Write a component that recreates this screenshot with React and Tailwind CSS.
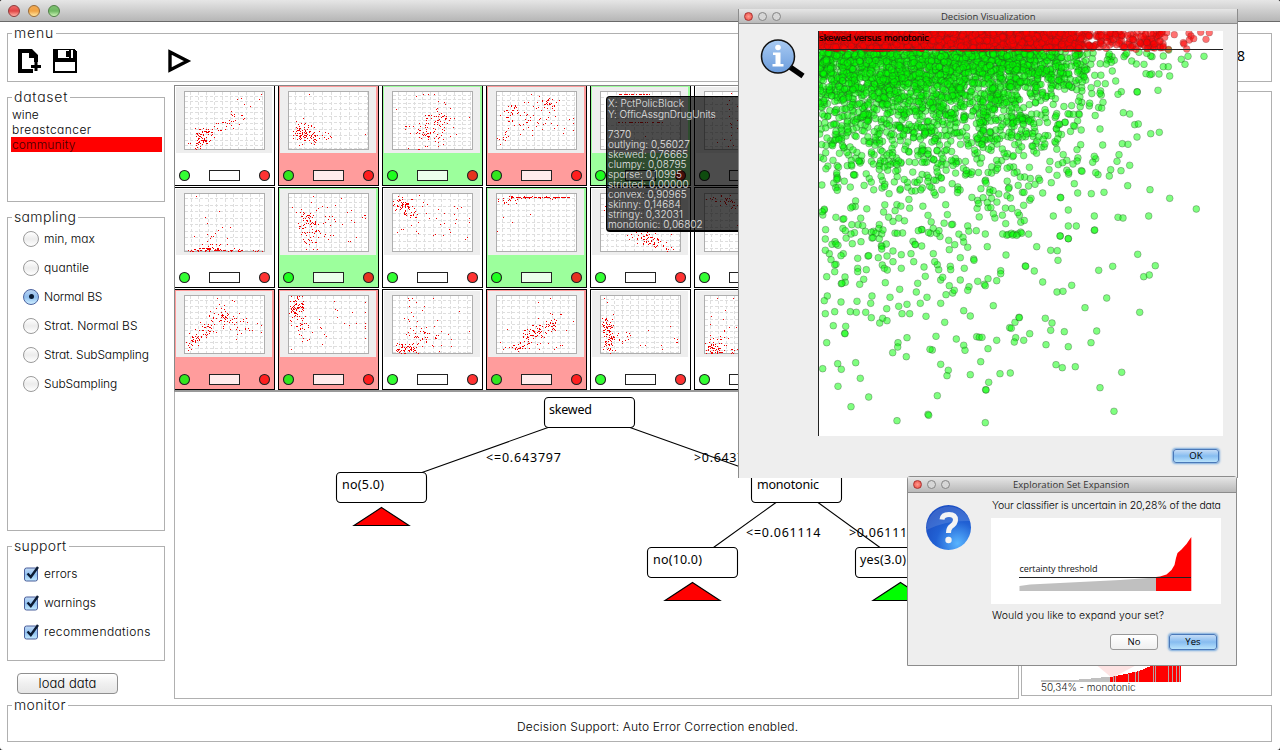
import React from 'react';

/* ---------- deterministic sample data ---------- */

function makeRandom(seed) {
  let s = seed >>> 0;
  return () => {
    s = (s + 0x6d2b79f5) >>> 0;
    let t = s;
    t = Math.imul(t ^ (t >>> 15), t | 1);
    t ^= t + Math.imul(t ^ (t >>> 7), t | 61);
    return ((t ^ (t >>> 14)) >>> 0) / 4294967296;
  };
}

function gauss(rnd) {
  const u = Math.max(rnd(), 1e-6);
  return Math.sqrt(-2 * Math.log(u)) * Math.cos(2 * Math.PI * rnd());
}

// cluster: [cx, cy, sx, sy, correlation, count]; band: [x0, x1, y0, y1, count]
const PLOTS = [
  { tone: 'white', gx: 8, gy: 5.5, clusters: [[17, 46, 5, 5, -0.4, 70], [35, 33, 11, 7, -0.8, 45]], dots: [[76, 2], [74, 7], [52, 7], [56, 6], [46, 19], [57, 23], [3, 51]] },
  { tone: 'red', gx: 9, gy: 6.5, clusters: [[14, 43, 5, 4, 0, 75], [24, 44, 7, 4, 0, 28], [13, 34, 4, 3, 0, 12]], dots: [[20, 2], [76, 42], [39, 41], [42, 45], [14, 26]] },
  { tone: 'green', gx: 8, gy: 4.2, clusters: [[40, 36, 12, 9, 0, 65], [46, 24, 5, 4, 0, 25], [34, 40, 5, 4, 0, 15]], dots: [[23, 4], [30, 2], [35, 2], [41, 2], [3, 17], [76, 25], [13, 34], [12, 34], [15, 56], [25, 57], [26, 57], [45, 9], [51, 10], [52, 12], [57, 16]] },
  { tone: 'red', gx: 8, gy: 5, clusters: [[50, 12, 9, 4, 0, 35], [14, 19, 5, 5, 0, 28], [34, 32, 15, 6, 0, 40], [8, 42, 3, 7, 0, 10]], dots: [[34, 2], [76, 26], [76, 38], [76, 31], [3, 52]] },
  { tone: 'green', gx: 9, gy: 7, clusters: [], bands: [[17, 52, 2, 2, 26], [14, 62, 30, 30, 25]], dots: [[30, 8], [20, 40], [44, 44]] },
  { tone: 'white', gx: 10, gy: 7, clusters: [[25, 36, 10, 14, 0, 22]], dots: [[24, 17], [60, 30]] },
  { tone: 'white', gx: 8.5, gy: 6.5, clusters: [[25, 48, 8, 6, 0, 18]], bands: [[3, 56, 55, 57, 46], [12, 40, 53, 55, 20], [50, 78, 56, 57, 8]], dots: [[11, 2], [34, 17], [20, 23], [22, 29], [37, 33], [45, 33], [9, 42], [26, 42], [42, 44], [42, 50]] },
  { tone: 'green', gx: 7.5, gy: 5, clusters: [[17, 26, 5, 8, 0, 55], [30, 36, 8, 13, 0, 35], [18, 46, 6, 5, 0, 15]], bands: [[34, 76, 10, 48, 14]], dots: [[24, 2], [52, 4], [76, 21], [76, 24], [62, 16], [3, 13]] },
  { tone: 'white', gx: 8.5, gy: 7, clusters: [[10, 11, 5, 5, 0, 55], [20, 14, 8, 7, 0, 25]], bands: [[4, 76, 18, 50, 22]], dots: [[61, 12], [64, 14], [68, 13], [76, 24], [76, 28], [5, 2], [30, 8]] },
  { tone: 'green', gx: 8, gy: 6, clusters: [[10, 7, 6, 4, 0, 16]], bands: [[14, 77, 3, 3.4, 70], [10, 60, 2, 5, 24]], dots: [[33, 20], [15, 28], [6, 23], [0, 37]] },
  { tone: 'white', gx: 9, gy: 6, clusters: [[40, 43, 9, 4, 0.5, 40], [58, 51, 9, 4, 0.6, 34]], dots: [[4, 12], [3, 16], [70, 40]] },
  { tone: 'white', gx: 9, gy: 7, clusters: [[26, 9, 12, 5, 0.6, 45]], dots: [[8, 3], [32, 31]] },
  { tone: 'red', gx: 7.8, gy: 6, clusters: [[9, 45, 5, 5, -0.7, 30], [21, 33, 6, 6, -0.5, 38], [36, 20, 7, 5, 0.1, 42], [50, 29, 9, 5, 0.3, 25]], dots: [[32, 2], [47, 4], [34, 8], [54, 17], [61, 22], [76, 29], [76, 36], [72, 27], [3, 54]] },
  { tone: 'red', gx: 7.8, gy: 7.5, clusters: [[7, 8, 4, 5, 0, 42], [6, 14, 3, 3, 0, 24], [9, 27, 6, 7, 0, 32], [14, 38, 6, 4, 0, 9]], dots: [[45, 5], [76, 6], [46, 13], [48, 14], [48, 21], [63, 16], [76, 16], [55, 27], [60, 29], [67, 27], [76, 27], [76, 30], [76, 32], [76, 42], [30, 23], [31, 31], [32, 32], [35, 38], [37, 40], [33, 48], [2, 53]] },
  { tone: 'white', gx: 8.5, gy: 6.5, clusters: [[11, 52, 5, 3, 0, 50], [24, 42, 8, 7, 0, 36], [18, 16, 5, 7, 0, 10], [38, 40, 10, 10, 0, 18]], dots: [[15, 2], [16, 4], [23, 6], [40, 2], [66, 15], [76, 35], [58, 43], [58, 50]] },
  { tone: 'red', gx: 8.2, gy: 6, clusters: [[34, 39, 6, 5, -0.4, 46], [48, 30, 7, 5, -0.6, 46], [21, 51, 6, 3, -0.2, 24], [50, 44, 7, 4, 0, 10]], dots: [[53, 2], [41, 6], [10, 33], [3, 46], [6, 53], [76, 25], [69, 34], [63, 49], [55, 18]] },
  { tone: 'white', gx: 8, gy: 5.3, clusters: [[8, 42, 3, 7, 0, 74], [5, 28, 3, 4, 0, 26], [22, 42, 7, 4, 0, 15]], dots: [[3, 2], [6, 6], [12, 18], [47, 34], [69, 30], [44, 49], [39, 49], [60, 49], [61, 53], [73, 42], [76, 46], [75, 46], [76, 43]] },
  { tone: 'white', gx: 8, gy: 6.2, clusters: [[9, 51, 6, 4, 0, 40]], bands: [[0, 50, 53, 57, 36], [4, 24, 30, 50, 12]], dots: [[12, 2], [28, 2], [20, 14], [18, 23], [6, 20], [5, 28], [31, 31]] },
];

const TONES = { white: '#ffffff', red: '#ff9c9c', green: '#9cff9c' };

function dotPath(plot, seed) {
  const rnd = makeRandom(seed);
  const pts = [...plot.dots];
  for (const [cx, cy, sx, sy, r, n] of plot.clusters) {
    for (let i = 0; i < n; i++) {
      const a = gauss(rnd);
      const b = gauss(rnd);
      pts.push([cx + sx * a, cy + sy * (r * a + Math.sqrt(1 - r * r) * b)]);
    }
  }
  for (const [x0, x1, y0, y1, n] of plot.bands || []) {
    for (let i = 0; i < n; i++) pts.push([x0 + (x1 - x0) * rnd(), y0 + (y1 - y0) * rnd()]);
  }
  return pts
    .map(([x, y]) => [Math.round(x), Math.round(y)])
    .filter(([x, y]) => x >= 0 && x <= 78 && y >= 0 && y <= 57)
    .map(([x, y]) => `M${x + 11} ${y + 7}h1v1h-1z`)
    .join('');
}

function gridPath(gx, gy) {
  let d = '';
  for (let x = gx * 0.65; x < 79; x += gx) d += `M${Math.round(x) + 11.5} 7v57`;
  for (let y = gy * 0.65; y < 57; y += gy) d += `M11 ${Math.round(y) + 7.5}h79`;
  return d;
}

function ScatterCell({ plot, index }) {
  return (
    <svg width="101" height="101" className="block" shapeRendering="crispEdges">
      <rect x="0.5" y="0.5" width="100" height="100" fill={TONES[plot.tone]} stroke="#000" />
      <rect x="2" y="2" width="96" height="66" fill="#eeeeee" />
      <rect x="10.5" y="6.5" width="80" height="58" fill="#fff" stroke="#aeaeae" />
      <path d={gridPath(plot.gx, plot.gy)} stroke="#dedede" strokeDasharray="3 2" fill="none" />
      <path d={dotPath(plot, index * 97 + 11)} fill="#f00000" />
      <rect x="35.5" y="85.5" width="30" height="10" fill="#fff" fillOpacity="0.8" stroke="#222" />
      <g shapeRendering="auto" stroke="#222" strokeWidth="1.1">
        <circle cx="10.5" cy="90.5" r="5" fill={plot.tone === 'white' ? '#33ff33' : plot.tone === 'red' ? '#33e61f' : '#1fff1f'} />
        <circle cx="90.5" cy="90.5" r="5" fill={plot.tone === 'white' ? '#ff3333' : plot.tone === 'red' ? '#ff1f1f' : '#e6331f'} />
      </g>
    </svg>
  );
}

/* ---------- decision scatter ---------- */

// Lower region, three units per pixel.
const SPARSE = [
  [271,27],[300,35],[291,43],[309,46],[303,42],[348,12],[352,41],[378,35],[411,24],[414,23],[433,26],[439,47],[441,49],[454,42],[440,57],[487,10],[474,63],[474,95],[534,34],[540,43],[541,44],[560,48],[528,71],[499,74],[456,78],[430,83],[399,78],[401,77],[368,85],[325,71],[318,77],[283,71],[271,61],[288,89],[303,103],[299,104],[299,125],[275,140],[330,141],[331,157],[319,161],[321,160],[368,115],[368,125],[394,119],[386,148],[374,163],[442,105],[448,115],[457,120],[499,115],[536,95],[567,111],[571,139],[548,160],[451,158],[494,178],[544,186],[465,202],[411,198],[407,220],[366,214],[318,216],[277,198],[268,212],[271,251],[299,245],[346,245],[364,247],[392,247],[409,263],[434,279],[443,265],[456,272],[455,236],[491,229],[516,223],[501,251],[524,251],[556,220],[576,202],[573,259],[295,287],[332,289],[329,310],[330,311],[275,338],[516,323],[489,338],[488,351],[473,368],[514,380],[308,401],[319,418],[362,398],[263,416],[309,469],[376,445],[401,501],[348,530],[486,572],[579,553],[581,556],[607,497],[592,360],[585,358],[603,319],[629,277],[617,220],[633,194],[653,189],[658,181],[643,167],[617,150],[623,142],[611,119],[607,104],[599,95],[595,71],[643,59],[659,44],[641,31],[684,22],[686,36],[698,52],[676,83],[716,87],[717,91],[646,109],[647,119],[688,115],[676,150],[702,170],[698,181],[728,154],[748,163],[751,167],[759,146],[785,152],[797,122],[797,131],[757,50],[751,12],[724,2],[803,12],[829,10],[833,15],[845,16],[813,75],[871,108],[872,109],[898,123],[905,50],[947,61],[967,62],[969,91],[976,18],[1000,26],[1078,1],[923,156],[966,186],[984,184],[1010,166],[1050,233],[1115,204],[1091,121],[1133,109],[1208,73],[1261,107],[1226,140],[1243,135],[1214,247],[775,227],[686,242],[706,258],[664,327],[686,346],[690,361],[725,320],[733,322],[741,322],[759,356],[785,331],[824,293],[829,295],[840,277],[852,262],[853,263],[842,323],[838,336],[866,331],[884,311],[931,265],[951,279],[947,301],[988,305],[1000,350],[933,344],[1085,303],[1068,338],[963,404],[982,413],[1021,410],[1160,427],[1095,473],[1137,544],[737,395],[706,434],[617,403],[640,421],[636,437],[795,431],[826,429],[761,457],[752,479],[753,480],[751,578],[331,2],[391,4],[444,0],[550,2],[605,10],[612,2],
];

// Right margin of the cloud, three units per pixel.
const MARGIN = [
  [416,150],[474,169],[522,169],[454,178],[465,193],[400,200],[415,200],[419,228],[387,222],[365,222],[348,221],[360,224],[342,193],[319,192],[305,183],[366,170],[362,168],[327,157],[350,160],[400,168],[286,165],[384,271],[321,275],[322,276],[274,275],[264,283],[257,243],[247,213],[253,181],[246,170],[240,178],[236,168],[232,180],[244,187],[229,192],[238,162],[282,170],[290,160],[226,251],[280,338],[299,342],[314,374],[325,372],[321,411],[362,401],[388,397],[277,431],[294,433],[267,464],[261,484],[299,496],[273,512],[242,509],[238,528],[218,435],[210,387],[219,307],[210,280],[204,524],[293,557],[360,569],[419,595],[499,627],[356,648],[264,652],[279,654],[222,577],[184,581],[143,579],[133,551],[193,648],[194,690],[115,630],[115,678],[139,678],[90,708],[115,716],[70,648],[91,592],[92,593],[38,579],[64,548],[29,541],[15,553],[3,595],[154,512],[156,514],[116,517],[81,526],[129,492],[98,488],[197,518],[193,469],[188,487],
];

const RED_MARGIN = [[410,98],[433,104],[477,100],[483,108],[478,120],[491,116],[460,128],[462,132],[470,147],[512,97],[538,98],[528,118],[415,148],[395,100],[388,125],[400,140],[372,132],[352,146],[404,112],[340,110],[362,100],[318,148],[330,128]];

function buildCloud() {
  const rnd = makeRandom(4242);
  const green = [];
  const red = [];
  const keep = (x, d) => {
    const edge = 190 + 15 * rnd() - d * 0.15;
    return x < edge || rnd() < Math.pow(Math.max(0, 1 - (x - edge) / (290 - edge)), 1.05);
  };
  for (let i = 0; i < 2150; i++) {
    const d = -Math.log(1 - rnd()) * 40;
    const x = rnd() * 285;
    if (d < 184 && !(x > 212 && d > 128) && keep(x, d)) green.push([x, 20 + d]);
  }
  for (let i = 0; i < 1080; i++) {
    const d = -Math.log(1 - rnd()) * 88;
    const x = rnd() * 285;
    // the right part below this depth is listed point by point
    if (d < 188 && !(x > 212 && d > 128) && keep(x, d)) green.push([x, 20 + d]);
  }
  for (const [x, y] of SPARSE) green.push([x / 3 - 83, y / 3 + 199]);
  for (const [x, y] of MARGIN) green.push([x / 3 + 212, y / 3 - 31]);
  for (let i = 0; i < 2100; i++) {
    const x = rnd() * 346;
    if (x < 235 || rnd() < Math.max(0.26, 1 - (x - 235) / 60)) red.push([x, rnd() * 17.6]);
  }
  for (const [x, y] of RED_MARGIN) red.push([x / 3 + 212, y / 3 - 31]);
  return { green, red };
}

const CLOUD = buildCloud();

function DecisionScatter() {
  return (
    <svg width="405" height="405" className="block bg-white">
      <g fill="#00ff00" fillOpacity="0.5" stroke="#303030" strokeOpacity="0.5" strokeWidth="0.6">
        {CLOUD.green.map(([x, y], i) => (
          <circle key={i} cx={x.toFixed(1)} cy={y.toFixed(1)} r="3.4" />
        ))}
      </g>
      <g fill="#ff0000" fillOpacity="0.55" stroke="#303030" strokeOpacity="0.4" strokeWidth="0.5">
        {CLOUD.red.map(([x, y], i) => (
          <circle key={i} cx={x.toFixed(1)} cy={y.toFixed(1)} r="3.4" />
        ))}
      </g>
      <path d="M0.5 0V405M0 18.5H405" stroke="#222" fill="none" />
      <text x="1" y="9.5" textLength="110" fontFamily="'DejaVu Sans', sans-serif" fontWeight="400" fontSize="9" fill="#000" stroke="#000" strokeWidth="0.2">
        skewed versus monotonic
      </text>
    </svg>
  );
}

/* ---------- decision tree ---------- */

function TreeLabel({ x, y, w, children }) {
  return (
    <text x={x} y={y} textLength={w} fontFamily="'Noto Sans', sans-serif" fontWeight="400" fontSize="12.5" fill="#000">
      {children}
    </text>
  );
}

function DecisionTree() {
  // viewBox follows window coordinates
  return (
    <svg width="843" height="306" viewBox="175 392 843 306" className="block">
      <g stroke="#000" fill="none" strokeWidth="1.1">
        <path d="M548 427.5 422 472.5M630 427.5 756 472.5M776 502.5 713.5 547.5M818 502.5 880 547.5" />
        <g fill="#fff">
          <rect x="544.5" y="397.5" width="90" height="30" rx="4" />
          <rect x="336.5" y="472.5" width="90" height="30" rx="4" />
          <rect x="751.5" y="472.5" width="90" height="30" rx="4" />
          <rect x="647.5" y="547.5" width="90" height="30" rx="4" />
          <rect x="855.5" y="547.5" width="90" height="30" rx="4" />
        </g>
        <path d="M381.5 507.5 409 525.5H354ZM692.5 582.5 720 600.5H665Z" fill="#ff0000" />
        <path d="M900.5 582.5 928 600.5H873Z" fill="#00ff00" />
      </g>
      <TreeLabel x="549" y="414" w="43">skewed</TreeLabel>
      <TreeLabel x="342" y="489" w="42">no(5.0)</TreeLabel>
      <TreeLabel x="757" y="489" w="62">monotonic</TreeLabel>
      <TreeLabel x="653" y="564" w="49">no(10.0)</TreeLabel>
      <TreeLabel x="860" y="564" w="46">yes(3.0)</TreeLabel>
      <TreeLabel x="486" y="462" w="75">&lt;=0.643797</TreeLabel>
      <TreeLabel x="694" y="462" w="66">&gt;0.643797</TreeLabel>
      <TreeLabel x="746" y="537" w="74.500">&lt;=0.061114</TreeLabel>
      <TreeLabel x="849" y="537" w="66">&gt;0.061114</TreeLabel>
    </svg>
  );
}

/* ---------- widgets ---------- */

function Group({ title, className, titleClass = 'tracking-[0.35px]', children }) {
  return (
    <fieldset className={`min-w-0 border border-[#b0b0b0] ${className}`}>
      <legend className={`ml-1 h-[15px] pl-[2px] pr-[2px] text-[14px] leading-[14px] text-[#111] ${titleClass}`}>{title}</legend>
      {children}
    </fieldset>
  );
}

function Radio({ label, checked, className = '' }) {
  return (
    <label className="flex h-[29px] items-center gap-[5px] pl-[15px] text-[12px]">
      <span
        className={
          checked
            ? 'flex size-4 items-center justify-center rounded-full border border-[#4a62a0] bg-linear-to-b from-[#b9d3f2] via-[#8fbdee] to-[#cdeeff]'
            : 'size-4 rounded-full border border-[#9a9a9a] bg-linear-to-b from-white via-[#ececec] to-white'
        }
      >
        {checked && <span className="size-[5px] rounded-full bg-[#0a1a33]" />}
      </span>
      <span className={`whitespace-nowrap ${className}`}>{label}</span>
    </label>
  );
}

function Check({ label, className = '' }) {
  return (
    <label className="flex h-[29px] items-center gap-[4px] pl-[15px] text-[12px]">
      <svg width="17" height="18" viewBox="0 0 17 18">
        <defs>
          <linearGradient id="chk" x1="0" y1="0" x2="0" y2="1">
            <stop offset="0" stopColor="#c4dbf6" />
            <stop offset="0.5" stopColor="#8fc0f0" />
            <stop offset="1" stopColor="#c3eaff" />
          </linearGradient>
        </defs>
        <rect x="1.5" y="3" width="13" height="13" rx="2" fill="url(#chk)" stroke="#4a5f9a" />
        <path d="M4.5 8.5 7.8 12 15 2" fill="none" stroke="#0b1b33" strokeWidth="2.4" />
      </svg>
      <span className={`whitespace-nowrap ${className}`}>{label}</span>
    </label>
  );
}

function Lights({ small }) {
  return small ? (
    <div className="flex gap-[5px]">
      <span className="size-[9px] rounded-full border border-[#a33] bg-radial from-[#ff9a90] to-[#e8403a]" />
      <span className="size-[9px] rounded-full border border-[#858585] bg-[#d6d6d6]" />
      <span className="size-[9px] rounded-full border border-[#858585] bg-[#d6d6d6]" />
    </div>
  ) : (
    <div className="flex gap-[8px]">
      <span className="size-3 rounded-full border border-[#8d3a3a] bg-linear-to-b from-[#ee6a68] via-[#e04345] to-[#ffb0a8]" />
      <span className="size-3 rounded-full border border-[#9a6a35] bg-linear-to-b from-[#f2a850] via-[#f0a444] to-[#ffe9a0]" />
      <span className="size-3 rounded-full border border-[#4e7f45] bg-linear-to-b from-[#7dc070] via-[#6fb863] to-[#cdf5b8]" />
    </div>
  );
}

const LUCIDA = "font-['Open_Sans','Noto_Sans',sans-serif] font-normal";
const BLUE_BUTTON = 'border-[#4a78b8] bg-linear-to-b from-[#c5dcf6] via-[#86bcf0] to-[#b8e2fb] shadow-[0_0_2px_1px_#76a9dc]';

function TitleText({ children, className }) {
  return <span className={`${LUCIDA} ${className} absolute whitespace-nowrap text-[9.5px] leading-none text-[#333]`}>{children}</span>;
}

const TIP = ['7370', 'outlying: 0,56027', 'skewed: 0,76665', 'clumpy: 0,08795', 'sparse: 0,10995', 'striated: 0,00000', 'convex: 0,90965', 'skinny: 0,14684', 'stringy: 0,32031', 'monotonic: 0,06802'];

export default function App() {
  return (
    <div className="h-[750px] w-[1280px] overflow-hidden bg-[#222]">
      <div className="relative flex h-[750px] w-[1280px] flex-col overflow-hidden rounded-[3px] bg-white font-['Inter',sans-serif] font-light leading-none tracking-[0.05px] text-black [font-feature-settings:'cv11']">
        <header className="flex h-[22px] shrink-0 items-center border-b border-[#6a6a6a] bg-linear-to-b from-[#e6e6e6] to-[#b6b6b6] pl-2">
          <Lights />
        </header>

        <Group title="menu" titleClass="tracking-[0.8px]" className="ml-[7px] mr-[8px] mt-[4px] h-[56px] shrink-0">
          <div className="flex items-start pl-[10px] pt-[8px]">
            <svg width="24" height="25" viewBox="0 0 24 25">
              <path d="M15 22H2V2H12" fill="none" stroke="#000" strokeWidth="4" />
              <path d="M11 0H14L20 6V13H16V9H11Z" fill="#000" />
              <path d="M13 17.500H23M18 13V22" stroke="#000" strokeWidth="3" />
            </svg>
            <svg width="24" height="24" viewBox="0 0 24 24" className="ml-[11px]" shapeRendering="crispEdges">
              <path d="M0 0H21L24 3V24H0Z" fill="#000" />
              <path d="M5 1H16V9H5ZM18 1H20V9H18ZM2 13H22V22H2Z" fill="#fff" />
              <path d="M13 2h4v6h-4z" fill="#000" />
            </svg>
            <svg width="24" height="24" viewBox="0 0 24 24" className="ml-[91px]">
              <path d="M2 3 19.500 12 2 21Z" fill="#fff" stroke="#000" strokeWidth="3.400" />
            </svg>
            <span className="ml-[1045px] font-['Noto_Sans',sans-serif] text-[14px] font-normal leading-none">8</span>
          </div>
        </Group>

        <main className="flex h-[616px] shrink-0 pl-[7px]">
          <aside className="flex w-[158px] shrink-0 flex-col gap-[8px] pt-[8px]">
            <Group title="dataset" titleClass="tracking-[0.75px]" className="h-[112px]">
              <ul className="pl-[3px] pr-[2px] pt-[2px] text-[12px] leading-[15px]">
                <li className="h-[15px] pl-px">wine</li>
                <li className="h-[15px] pl-px tracking-[0.45px]">breastcancer</li>
                <li className="h-[15px] bg-[#ff0000] pl-px tracking-[0.15px] text-[#400]">community</li>
              </ul>
            </Group>
            <Group title="sampling" className="h-[321px]">
              <div className="-mt-px">
                <Radio label="min, max" className="tracking-[-0.05px]" />
                <Radio label="quantile" />
                <Radio label="Normal BS" checked className="tracking-[-0.2px]" />
                <Radio label="Strat. Normal BS" />
                <Radio label="Strat. SubSampling" className="tracking-[-0.13px]" />
                <Radio label="SubSampling" className="tracking-[-0.1px]" />
              </div>
            </Group>
            <Group title="support" className="h-[122px]">
              <div className="pt-[5px]">
                <Check label="errors" />
                <Check label="warnings" />
                <Check label="recommendations" className="tracking-[0.38px]" />
              </div>
            </Group>
            <button className="ml-[10px] mt-[4px] h-[21px] w-[101px] rounded-[4px] border border-[#8f8f8f] bg-linear-to-b from-white via-[#f0f0f0] to-[#e6e6e6] text-[13px] leading-none">
              load data
            </button>
          </aside>

          <section className="ml-[9px] mt-[3px] h-[614px] w-[845px] shrink-0 border border-[#b0b0b0]">
            <div className="-ml-px -mt-px h-[307px] w-[845px] overflow-hidden border-b-2 border-l border-t border-[#888] border-b-[#999]">
              <div className="-ml-px -mt-px grid w-max grid-cols-[repeat(6,101px)] gap-x-[3px] gap-y-px bg-white">
                {PLOTS.map((p, i) => (
                  <ScatterCell key={i} plot={p} index={i} />
                ))}
              </div>
            </div>
            <DecisionTree />
          </section>

          <section className="ml-[2px] mt-[9px] flex h-[605px] w-[251px] shrink-0 flex-col justify-end border border-[#b0b0b0]">
            <div className="pb-[3px] pl-[19px]">
              <svg width="142" height="30" viewBox="0 0 142 30" className="block" shapeRendering="crispEdges">
                <path d="M40 0 71 26 105 8V0Z" fill="#fde3e3" shapeRendering="auto" />
                <path d="M0 30V28.500L30 28 45 27 55 26 69 24.500V30Z" fill="#c0c0c0" />
                <path d="M69 30V25L85 22 98 19 110 14 120 10 132 4 140 0V30Z" fill="#ff0000" />
                <path d="M72.500 24v6M74.500 24v6M87.500 22v8M94.500 20v10M97.500 19v11M112.500 13v17M114.500 12v18M127.500 6v24M131.500 5v25M135.500 3v27M138.500 2v28" stroke="#b8a0a0" />
              </svg>
              <p className="text-[10px] leading-[10px] tracking-[-0.05px] text-[#222]">50,34% - monotonic</p>
            </div>
          </section>
        </main>

        <Group title="monitor" className="ml-[7px] mr-[8px] h-[44px] shrink-0">
          <p className="pl-[509px] pt-[7px] text-[12px] leading-[14px] tracking-[0.17px]">Decision Support: Auto Error Correction enabled.</p>
        </Group>

        <div className="absolute left-[606px] top-[96px] h-[136px] w-[180px] rounded-[4px] border border-b-2 border-black bg-black/70 pl-px pt-px text-[10px] text-[#e4e4e4]">
          <p className="h-[11px] leading-[11px]">X: PctPolicBlack</p>
          <p className="mb-[9px] h-[11px] whitespace-nowrap leading-[11px] tracking-[-0.05px]">Y: OfficAssgnDrugUnits</p>
          {TIP.map((t) => (
            <p key={t} className="h-[10px] leading-[10px]">{t}</p>
          ))}
        </div>

        <div className="absolute left-[738px] top-[9px] flex h-[469px] w-[500px] flex-col border-l border-r border-[#8c8c8c] bg-[#eeeeee]">
          <div className="relative flex h-[15px] shrink-0 items-center border-b border-[#8c8c8c] bg-linear-to-b from-[#e6e6e6] to-[#b9b9b9] pl-[5px]">
            <Lights small />
            <TitleText className="left-[202px] top-[3px] tracking-[-0.05px]">Decision Visualization</TitleText>
          </div>
          <div className="flex pt-[7px]">
            <svg width="79" height="60" viewBox="739 31 79 60" className="shrink-0">
              <defs>
                <linearGradient id="lens" x1="0" y1="0" x2="0" y2="1">
                  <stop offset="0" stopColor="#a9cbf3" />
                  <stop offset="1" stopColor="#6b9cdc" />
                </linearGradient>
              </defs>
              <path d="M790 67 803 76" stroke="#000" strokeWidth="5.500" />
              <circle cx="778" cy="56.500" r="16.500" fill="url(#lens)" stroke="#111" strokeWidth="1.500" />
              <circle cx="778" cy="47.500" r="2.800" fill="#fff" />
              <path d="M773 52.500H780.500V64H783.500V66.500H772.500V64H775.500V55H773Z" fill="#fff" />
            </svg>
            <DecisionScatter />
          </div>
          <button className={`ml-[434px] mt-[13px] h-[14px] w-[46px] rounded-[3px] border text-[9.5px] leading-none ${LUCIDA} ${BLUE_BUTTON}`}>OK</button>
        </div>

        <div className="absolute left-[907px] top-[476px] flex h-[190px] w-[330px] flex-col rounded-t-[3px] border border-[#8c8c8c] bg-[#eeeeee]">
          <div className="relative flex h-[16px] shrink-0 items-center border-b border-[#8c8c8c] bg-linear-to-b from-[#e6e6e6] to-[#b9b9b9] pl-[5px]">
            <Lights small />
            <TitleText className="left-[105px] top-[3px] tracking-[0.05px]">Exploration Set Expansion</TitleText>
          </div>
          <div className="flex">
            <svg width="83" height="80" viewBox="908 493 83 80" className="shrink-0">
              <defs>
                <radialGradient id="orb" cx="0.7" cy="0.85" r="0.8">
                  <stop offset="0" stopColor="#58b4ff" />
                  <stop offset="0.6" stopColor="#2161d4" />
                  <stop offset="1" stopColor="#1c50c4" />
                </radialGradient>
              </defs>
              <circle cx="948.500" cy="527.500" r="22.500" fill="url(#orb)" />
              <path d="M926.500 530A22.500 22.500 0 0 1 970 521Q946 520 926.500 530Z" fill="#fff" fillOpacity="0.13" />
              <path d="M942 519.500Q942.500 514.500 949 514.500 955.500 514.500 955.500 520 955.500 523.500 951 526.500 948.500 528.500 948.500 533" fill="none" stroke="#f4f4f4" strokeWidth="5" />
              <circle cx="948.500" cy="540" r="3.200" fill="#f4f4f4" />
            </svg>
            <div className="w-[230px] pt-[6px] text-[10.5px]">
              <p className="h-[14px] whitespace-nowrap pl-px leading-[14px] tracking-[-0.19px]">Your classifier is uncertain in 20,28% of the data</p>
              <svg width="230" height="86" viewBox="991 518 230 86" className="mt-[5px] block bg-white">
                <path d="M1019.500 591V586L1030 584.500 1080 582 1120 580 1156 577.500V591Z" fill="#c0c0c0" />
                <path d="M1156 591V577L1160 576.500 1166.500 574.500 1171.500 570 1174.500 565 1176 558 1177.500 553 1181.500 549.500 1186.500 544 1191.300 537V591Z" fill="#ff0000" />
                <path d="M1019 577.500H1191" stroke="#222" />
                <text x="1019.500" y="572" textLength="78" fontFamily="'Open Sans', sans-serif" fontWeight="400" fontSize="9" fill="#111">certainty threshold</text>
              </svg>
              <p className="mt-[5px] h-[14px] whitespace-nowrap pl-px leading-[14px]">Would you like to expand your set?</p>
              <div className={`mt-[11px] flex items-center justify-end gap-[11px] pr-[4px] text-[9.5px] ${LUCIDA}`}>
                <button className="h-[16px] w-[48px] rounded-[3px] border border-[#999] bg-linear-to-b from-white to-[#f0f0f0] leading-none">No</button>
                <button className={`h-[16px] w-[48px] rounded-[3px] border leading-none ${BLUE_BUTTON}`}>Yes</button>
              </div>
            </div>
          </div>
        </div>
      </div>
    </div>
  );
}
